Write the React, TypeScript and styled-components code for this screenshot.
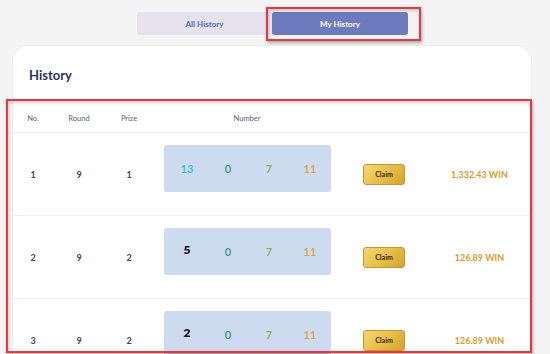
import React from "react";
import styled, { createGlobalStyle } from "styled-components";

const Global = createGlobalStyle`
  html, body { margin: 0; padding: 0; background: #f4f4f5; }
  body { font-family: "Lato", "Noto Sans", sans-serif; width: 550px; height: 354px; overflow: hidden; }
`;

const Page = styled.div`
  display: flex;
  flex-direction: column;
  padding-top: 12px;
  height: 354px;
  box-sizing: border-box;
`;

const TabBar = styled.div`
  align-self: flex-start;
  margin-left: 137px;
  display: flex;
  background: #e6e3ee;
  border-radius: 3px;
  height: 23px;
`;

const Tab = styled.div<{ $active?: boolean }>`
  position: relative;
  width: ${(p) => (p.$active ? 136 : 135)}px;
  display: flex;
  align-items: center;
  justify-content: center;
  font-size: 8px;
  font-weight: 700;
  border-radius: 3px;
  color: ${(p) => (p.$active ? "#ffffff" : "#4d6ac4")};
  background: ${(p) => (p.$active ? "#6c7bbd" : "transparent")};
`;

const Annotation = styled.div<{ $t: number; $l: number; $r: number; $b: number }>`
  position: absolute;
  top: ${(p) => p.$t}px;
  left: ${(p) => p.$l}px;
  right: ${(p) => p.$r}px;
  bottom: ${(p) => p.$b}px;
  border: 2px solid #e8383d;
  box-shadow: 1px 2px 3px rgba(0, 0, 0, 0.3), inset 1px 2px 3px rgba(0, 0, 0, 0.18);
  pointer-events: none;
  z-index: 2;
`;

const Card = styled.div`
  margin: 10px 0 0 12px;
  width: 520px;
  flex: 1;
  min-height: 0;
  background: #ffffff;
  border: 1px solid #ececee;
  border-bottom: none;
  box-sizing: border-box;
  border-radius: 16px 16px 0 0;
  display: flex;
  flex-direction: column;
`;

const Title = styled.div`
  padding: 21px 0 0 16px;
  height: 16px;
  line-height: 16px;
  font-size: 13px;
  font-weight: 700;
  color: #2c3457;
`;

const Table = styled.div`
  position: relative;
  margin-top: 21px;
  flex: 1;
  min-height: 0;
`;

const TableBody = styled.div`
  height: 100%;
  overflow: hidden;
  display: flex;
  flex-direction: column;
`;

const Grid = styled.div`
  display: grid;
  grid-template-columns: 40px 52px 48px 188px 86px 105px;
  align-items: center;
  justify-items: center;
  flex-shrink: 0;
`;

const HeadRow = styled(Grid)`
  height: 27px;
  padding-top: 1px;
  border-bottom: 1px solid #f0f0f4;
  font-size: 7.5px;
  color: #5b627c;
`;

const Row = styled(Grid)`
  border-bottom: 1px solid #f0f0f4;
`;

const Cell = styled.div`
  font-size: 9px;
  font-weight: 700;
  color: #3a4466;
`;

const NumBox = styled.div`
  margin: 12px 0 23px;
  width: 167px;
  height: 47px;
  background: #cddbf0;
  border-radius: 3px;
  display: grid;
  grid-template-columns: repeat(4, 41px);
  align-items: center;
  justify-items: center;
  padding-left: 3px;
  box-sizing: border-box;
`;

const Ball = styled.span<{ $c: string; $strong?: boolean }>`
  color: ${(p) => p.$c};
  font-size: ${(p) => (p.$strong ? 12 : 11)}px;
  font-weight: ${(p) => (p.$strong ? 800 : 600)};
  margin-top: ${(p) => (p.$strong ? -4 : 0)}px;
`;

const Claim = styled.button`
  width: 42px;
  height: 21px;
  border: 1px solid #c8952a;
  border-radius: 3px;
  background: linear-gradient(135deg, #f4d872 0%, #e6bd45 55%, #d5a42b 100%);
  font-family: inherit;
  font-size: 7px;
  font-weight: 700;
  color: #3a2a12;
  padding: 0;
`;

const Win = styled.div`
  font-size: 9px;
  font-weight: 700;
  color: #dc9b1f;
`;

type R = { no: number; round: number; prize: number; nums: [string, string, string, string]; first: string; firstStrong?: boolean; win: string };

const rows: R[] = [
  { no: 1, round: 9, prize: 1, nums: ["13", "0", "7", "11"], first: "#2dc3c6", win: "1,332.43 WIN" },
  { no: 2, round: 9, prize: 2, nums: ["5", "0", "7", "11"], first: "#14141c", firstStrong: true, win: "126.89 WIN" },
  { no: 3, round: 9, prize: 2, nums: ["2", "0", "7", "11"], first: "#14141c", firstStrong: true, win: "126.89 WIN" },
];

export default function App() {
  return (
    <>
      <Global />
      <Page>
        <TabBar>
          <Tab>All History</Tab>
          <Tab $active>
            My History
            <Annotation $t={-5} $l={-6} $r={-13} $b={-6} />
          </Tab>
        </TabBar>
        <Card>
          <Title>History</Title>
          <Table>
            <Annotation $t={-5} $l={-7} $r={-1} $b={1} />
            <TableBody>
              <HeadRow>
                <span>No.</span>
                <span>Round</span>
                <span>Prize</span>
                <span>Number</span>
                <span />
                <span />
              </HeadRow>
              {rows.map((r) => (
                <Row key={r.no}>
                  <Cell>{r.no}</Cell>
                  <Cell>{r.round}</Cell>
                  <Cell>{r.prize}</Cell>
                  <NumBox>
                    <Ball $c={r.first} $strong={r.firstStrong}>{r.nums[0]}</Ball>
                    <Ball $c="#2a9d78">{r.nums[1]}</Ball>
                    <Ball $c="#8bb23a">{r.nums[2]}</Ball>
                    <Ball $c="#e3a227">{r.nums[3]}</Ball>
                  </NumBox>
                  <Claim>Claim</Claim>
                  <Win>{r.win}</Win>
                </Row>
              ))}
            </TableBody>
          </Table>
        </Card>
      </Page>
    </>
  );
}
